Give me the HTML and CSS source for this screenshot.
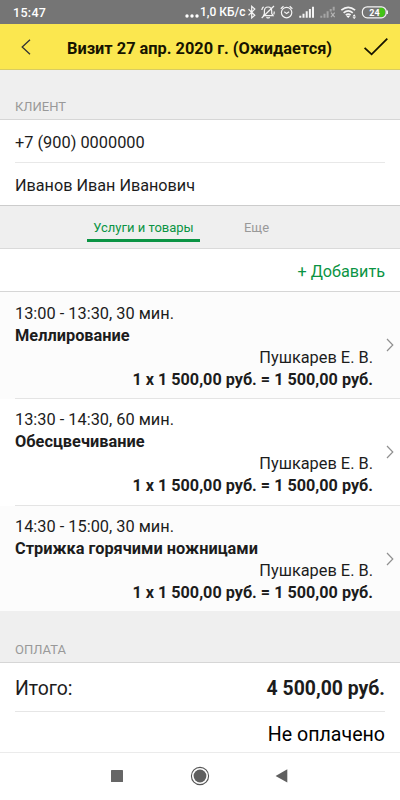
FILE: index.html
```
<!DOCTYPE html>
<html lang="ru">
<head>
    <meta charset="UTF-8">
    <meta name="viewport" content="width=device-width, initial-scale=1.0">
    <title>Визит</title>
    <link rel="stylesheet" href="styles.css">
</head>
<body>
    <div class="status-bar">
        <span class="clock">15:47</span>
        <svg class="dots" width="14" height="4" viewBox="0 0 14 4"><g fill="#fff"><circle cx="2" cy="2" r="1.7"/><circle cx="7" cy="2" r="1.7"/><circle cx="12" cy="2" r="1.7"/></g></svg>
        <span class="speed">1,0 КБ/с</span>
        <svg class="status-icons" width="143" height="24" viewBox="245 0 143 24" fill="none" stroke="#f4f4f4" stroke-width="1.2">
            <!-- bluetooth -->
            <path d="M248.5 9.2l6.3 6.1-3.1 2.6V6.4l3.1 2.7-6.3 6.1"/>
            <!-- звук выключен -->
            <path d="M263.5 15.7h9.6l-1.4-2.2V11c0-2.4-1.3-4-3.6-4s-3.7 1.6-3.7 4v2.4zM266.5 17.2q1.6 1.4 3.2 0M261.7 18L274 6M261.8 10q.3-2 1.8-3.2M274.2 11.5q.2 1.8-.5 3"/>
            <!-- будильник -->
            <circle cx="286.6" cy="12.6" r="5.2"/>
            <path d="M284.3 11.8l2.3 1.8 2.5-1.8M280.8 8.7l2.7-2.5M292.4 8.7l-2.7-2.5"/>
            <!-- сигнал -->
            <g stroke-width="2">
                <path d="M300.3 17.7v-2M303.5 17.7v-4M306.7 17.7V11.3M309.9 17.7V9M313 17.7V6.7"/>
                <path stroke="#a5a5a5" d="M321.3 17.7v-2M324.5 17.7v-4M327.6 17.7V11.3M330.7 11.5V9M333.7 10.5V6.7"/>
            </g>
            <path stroke="#b5b5b5" d="M331 12.7l3.7 4.4M334.7 12.7l-3.7 4.4"/>
            <!-- wi-fi -->
            <g stroke-width="1.7">
                <path d="M341.3 10.2q6.9-5.7 13.8 0M343.6 12.8q4.6-3.8 9.2 0M345.8 15.2q2.4-1.9 4.8 0"/>
            </g>
            <path fill="#fff" stroke="none" d="M346.4 16.1h3.6l-1.8 2zM352.5 16.5l1.7-2.2 1.7 2.2zM352.5 17.2h3.4l-1.7 1.7z"/>
            <!-- батарея -->
            <path fill="#42c316" stroke="none" d="M379.5 7.6h1.5q4 0 4 4.7t-4 4.7h-1.5z"/>
            <rect x="362.4" y="6.8" width="23.8" height="11" rx="4.8"/>
            <path stroke-width="1.5" d="M387.2 10.5v3.5"/>
            <text class="battery-text" x="369.3" y="15.6">24</text>
        </svg>
    </div>

    <div class="header">
        <svg class="back" width="12" height="16" viewBox="0 0 12 16"><path d="M10 .8L2.2 8l7.8 7.2" fill="none" stroke="#333" stroke-width="1.3"/></svg>
        <h1>Визит 27 апр. 2020 г. (Ожидается)</h1>
        <svg class="done" width="26" height="20" viewBox="0 0 26 20"><path d="M1.6 10.8l7 6.5L24.3 1.6" fill="none" stroke="#161400" stroke-width="1.8"/></svg>
    </div>

    <div class="section-title client-title"><span>КЛИЕНТ</span></div>
    <div class="client">
        <div class="client-row phone"><span>+7 (900) 0000000</span></div>
        <div class="client-row name"><span>Иванов Иван Иванович</span></div>
    </div>

    <div class="tabs">
        <div class="tab active"><span>Услуги и товары</span></div>
        <div class="tab"><span>Еще</span></div>
    </div>

    <div class="add-row"><span>+ Добавить</span></div>

    <div class="services">
        <div class="service">
            <div class="info">
                <div class="time"><span>13:00 - 13:30, 30 мин.</span></div>
                <div class="title"><span>Меллирование</span></div>
                <div class="master"><span>Пушкарев Е. В.</span></div>
                <div class="price"><span>1 x 1 500,00 руб. = 1 500,00 руб.</span></div>
            </div>
            <svg class="arrow" width="8" height="14" viewBox="0 0 8 14"><path d="M1 1l5.8 6L1 13"/></svg>
        </div>
        <div class="service">
            <div class="info">
                <div class="time"><span>13:30 - 14:30, 60 мин.</span></div>
                <div class="title"><span>Обесцвечивание</span></div>
                <div class="master"><span>Пушкарев Е. В.</span></div>
                <div class="price"><span>1 x 1 500,00 руб. = 1 500,00 руб.</span></div>
            </div>
            <svg class="arrow" width="8" height="14" viewBox="0 0 8 14"><path d="M1 1l5.8 6L1 13"/></svg>
        </div>
        <div class="service">
            <div class="info">
                <div class="time"><span>14:30 - 15:00, 30 мин.</span></div>
                <div class="title"><span>Стрижка горячими ножницами</span></div>
                <div class="master"><span>Пушкарев Е. В.</span></div>
                <div class="price"><span>1 x 1 500,00 руб. = 1 500,00 руб.</span></div>
            </div>
            <svg class="arrow" width="8" height="14" viewBox="0 0 8 14"><path d="M1 1l5.8 6L1 13"/></svg>
        </div>
    </div>

    <div class="section-title payment-title"><span>ОПЛАТА</span></div>
    <div class="payment">
        <div class="total">
            <span>Итого:</span>
            <span class="sum">4 500,00 руб.</span>
        </div>
        <div class="paid"><span>Не оплачено</span></div>
    </div>

    <div class="nav-bar">
        <svg width="12" height="12" viewBox="0 0 12 12"><rect width="12" height="12" rx=".6" fill="#666"/></svg>
        <svg class="home" width="20" height="20" viewBox="0 0 20 20"><circle cx="10" cy="10" r="8.6" fill="none" stroke="#555" stroke-width="1.1"/><circle cx="10" cy="10" r="6.4" fill="#5f5f5f"/></svg>
        <svg width="13" height="14" viewBox="0 0 13 14"><path d="M12.3.3v13.2L.6 6.9z" fill="#5f5f5f"/></svg>
    </div>
</body>
</html>
```
FILE: styles.css
```
* {
    box-sizing: border-box;
}
body {
    font-family: Roboto, 'Liberation Sans', sans-serif;
    font-size: 16.35px;
    background-color: #fff;
    color: #1c1c1c;
    margin: 0;
    padding: 0;
}
svg {
    display: block;
    flex-shrink: 0;
}
span {
    white-space: nowrap;
}
.status-bar {
    display: flex;
    align-items: center;
    height: 24px;
    padding: 0 12px 0 13px;
    background-color: #757575;
    color: #fff;
    font-size: 12.5px;
    font-weight: 500;
}
.clock {
    letter-spacing: 0.3px;
}
.dots {
    margin: 7px 1px 0 auto;
}
.speed {
    width: 45px;
    font-size: 12px;
}
.battery-text {
    font-size: 9px;
    font-weight: 700;
    fill: #fff;
    stroke: none;
}
.header {
    display: flex;
    align-items: center;
    height: 46px;
    padding: 0 11px 0 20px;
    background-color: #fbe74f;
    border-bottom: 1px solid #d9cc60;
}
.header h1 {
    margin: 4px 0 0 35px;
    font-size: 16.35px;
    font-weight: 700;
    color: #161400;
    white-space: nowrap;
}
.done {
    margin-left: auto;
}
.section-title {
    display: flex;
    align-items: flex-end;
    padding: 0 15px 5px;
    background-color: #efefef;
    border-bottom: 1px solid #d6d6d6;
    color: #999;
    font-size: 13px;
}
.client-title {
    height: 50px;
}
.client {
    padding-left: 15px;
}
.client-row {
    display: flex;
    align-items: center;
    height: 43px;
}
.phone {
    margin-right: 15px;
    padding-top: 2px;
    border-bottom: 1px solid #e8e8e8;
}
.name {
    height: 42px;
    padding-top: 2px;
    font-size: 16.2px;
}
.tabs {
    display: flex;
    height: 44px;
    padding: 0 87px;
    background-color: #efefef;
    border-top: 1px solid #ccc;
    border-bottom: 1px solid #dadada;
    color: #999;
    font-size: 13px;
}
.tab {
    display: flex;
    justify-content: center;
    width: 113px;
    height: 36px;
    padding-top: 14px;
}
.active {
    color: #0b9444;
    border-bottom: 3px solid #0b9444;
}
.add-row {
    display: flex;
    align-items: center;
    justify-content: flex-end;
    height: 43px;
    padding: 2px 15px 0 0;
    border-bottom: 1px solid #d6d6d6;
    color: #0b9444;
    font-size: 16.2px;
}
.service {
    position: relative;
    height: 107px;
    padding-left: 15px;
    line-height: 22px;
    background-color: #fcfcfc;
}
.service:nth-child(2) {
    background-color: #fff;
}
.info {
    height: 100%;
    padding: 10px 27px 0 0;
    border-bottom: 1px solid #e4e4e4;
}
.service:first-child .info {
    padding-top: 11px;
}
.service:last-child {
    height: 105px;
}
.service:last-child .info {
    border-bottom: none;
}
.title, .price {
    font-weight: 700;
}
.master, .price {
    text-align: right;
}
.price {
    font-size: 16.2px;
}
.arrow {
    position: absolute;
    right: 6px;
    top: 46px;
    fill: none;
    stroke: #909090;
    stroke-width: 1.2;
}
.payment-title {
    height: 52px;
}
.total {
    display: flex;
    align-items: center;
    justify-content: space-between;
    height: 49px;
    margin: 0 15px;
    padding-top: 2px;
    border-bottom: 1px solid #e6e6e6;
    font-size: 19.4px;
}
.sum {
    font-weight: 700;
}
.paid {
    display: flex;
    align-items: center;
    justify-content: flex-end;
    height: 41px;
    padding: 4px 15px 0;
    border-bottom: 1px solid #ebebeb;
    font-size: 19.6px;
    color: #000;
}
.nav-bar {
    display: flex;
    align-items: center;
    height: 47px;
    padding: 0 112px 1px 111px;
    justify-content: space-between;
}
.home {
    margin-left: 2px;
}
```
